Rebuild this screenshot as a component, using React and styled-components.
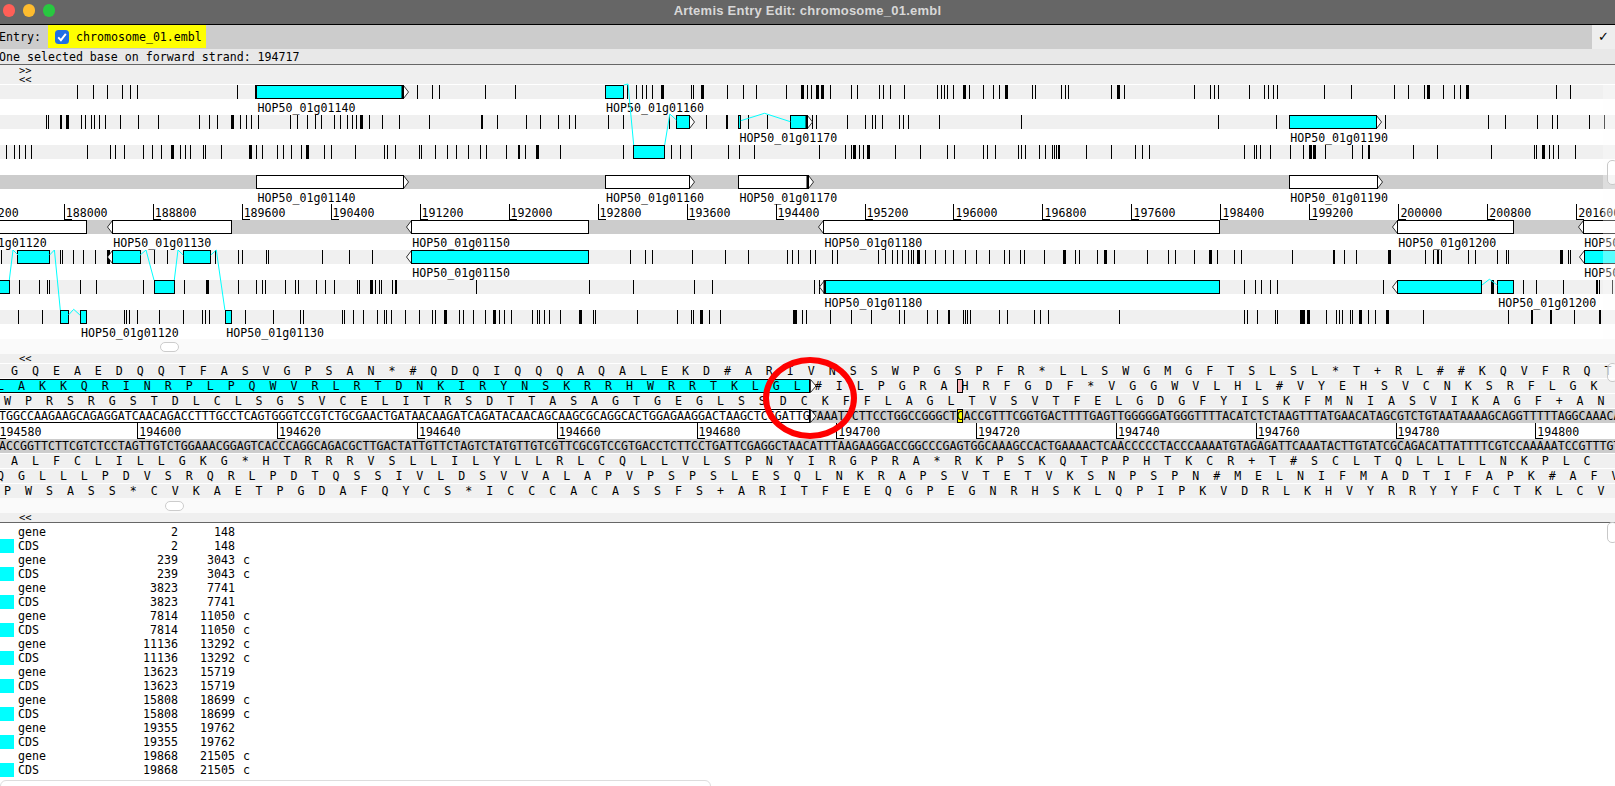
import React from "react";
import styled, { createGlobalStyle } from "styled-components";

const MONO = `"DejaVu Sans Mono", "Liberation Mono", monospace`;
const CYAN = "#00ffff";

const GlobalStyle = createGlobalStyle`
  html, body { margin: 0; padding: 0; background: #fff; overflow: hidden; }
  * { box-sizing: border-box; }
`;

const Page = styled.div`
  position: relative;
  width: 1615px;
  height: 786px;
  overflow: hidden;
  background: #fff;
  color: #000;
  font: 11.61px/14px ${MONO};
`;

/* ---- window chrome ---- */
const TitleBar = styled.header`
  display: grid;
  grid-template-columns: 1fr auto 1fr;
  align-items: center;
  height: 25px;
  padding-bottom: 3px;
  background: #666;
  border-bottom: 1px solid #000;
`;
const Lights = styled.div`
  display: flex;
  gap: 7.6px;
  padding-left: 3px;
`;
const Light = styled.span`
  width: 12.4px;
  height: 12.4px;
  border-radius: 50%;
  background: ${(p) => p.$color};
`;
const Title = styled.h1`
  margin: 0;
  font: bold 13px "Liberation Sans", Arial, sans-serif;
  letter-spacing: 0.24px;
  color: #d8d8d8;
`;
const EntryBar = styled.div`
  display: flex;
  align-items: stretch;
  height: 24px;
  background: #ccc;
`;
const EntryLabel = styled.span`
  line-height: 24px;
  margin-left: -1px;
  width: 49px;
`;
const EntryChip = styled.label`
  display: flex;
  align-items: center;
  gap: 7px;
  width: 158px;
  height: 23px;
  padding-left: 7px;
  background: #ffff00;
`;
const CheckBox = styled.span`
  display: block;
  width: 14px;
  height: 14px;
  border-radius: 3.5px;
  background: #1f6fe5;
`;
const ConfirmButton = styled.button`
  margin-left: auto;
  width: 23px;
  border: 0;
  padding: 0 0 2px;
  background: #eee;
  font: bold 13px "DejaVu Sans", sans-serif;
  color: #000;
`;
const StatusBar = styled.div`
  height: 16px;
  background: #e8e8e8;
  border-bottom: 1px solid #666;
  line-height: 17px;
  text-indent: -1px;
  white-space: pre;
`;

/* ---- feature panel ---- */
const Panel = styled.section`
  position: relative;
`;
const NavBar = styled.div`
  display: flex;
  flex-direction: column;
  height: ${(p) => p.$h}px;
  margin-bottom: ${(p) => p.$gap || 0}px;
  padding: ${(p) => p.$pad || 0}px 0 0 19px;
  background: #efefef;
  font-size: 10.4px;
  line-height: 9px;
  border-bottom: ${(p) => (p.$rule ? "1px solid #666" : "0")};
`;
const Strip = styled.div`
  height: 14px;
  background: ${(p) => (p.$gene ? "#ccc" : "#f0f0f0")};
`;
const StripArt = styled.svg`
  display: block;
  overflow: visible;
`;
const LabelRow = styled.div`
  position: relative;
  z-index: 1;
  height: ${(p) => p.$h || 16}px;
`;
const Label = styled.span.attrs((p) => ({ style: { left: p.$x } }))`
  position: absolute;
  top: 1px;
  line-height: 16px;
  white-space: pre;
`;
const Ruler = styled.div`
  position: relative;
  height: 16px;
  overflow: hidden;
`;
const RulerMark = styled.span.attrs((p) => ({ style: { left: p.$x } }))`
  position: absolute;
  top: 0;
  height: 16px;
  padding-left: 1px;
  border-left: 1px solid #000;
  line-height: 18px;
  &::after {
    content: "";
    position: absolute;
    left: 0;
    bottom: 0;
    width: 7px;
    border-bottom: 1px solid #000;
  }
`;
const Connectors = styled.svg`
  position: absolute;
  left: 0;
  top: 0;
  z-index: 2;
  pointer-events: none;
`;
const HScroll = styled.div`
  position: relative;
  height: 15px;
  background: #fafafa;
`;
const HThumb = styled.span.attrs((p) => ({ style: { left: p.$x } }))`
  position: absolute;
  top: 3px;
  width: 19px;
  height: 10px;
  background: #fff;
  border: 1px solid #ccc;
  border-radius: 5px;
`;

/* ---- sequence panel ---- */
const CodonRow = styled.div`
  position: relative;
  height: 14px;
  margin-top: 1px;
  overflow: hidden;
  background: #f0f0f0;
  white-space: pre;
`;
const DnaRow = styled(CodonRow)`
  margin-top: ${(p) => p.$top ?? 1}px;
  background: #ccc;
`;
const SeqText = styled.span.attrs((p) => ({ style: { left: p.$x } }))`
  position: absolute;
  top: 0;
  z-index: 2;
  line-height: 14px;
`;
const GeneFill = styled.i`
  position: absolute;
  left: -2px;
  top: 0;
  bottom: 0;
  width: 812px;
  z-index: 1;
  background: ${(p) => p.$fill};
  border: 1px solid #000;
`;
const GeneTip = styled.svg`
  position: absolute;
  left: 809.5px;
  top: 0;
  z-index: 3;
`;
const BaseMark = styled.i`
  position: absolute;
  left: 957px;
  top: 0;
  bottom: 0;
  width: 6px;
  z-index: 1;
  background: ${(p) => p.$fill};
  border: 1px solid #000;
`;
const Annotation = styled.div`
  position: absolute;
  left: 763px;
  top: 357px;
  width: 94px;
  height: 82px;
  z-index: 5;
  border: 6px solid #ff0000;
  border-radius: 50%;
`;

/* ---- feature list ---- */
const FeatureList = styled.ul`
  margin: 0;
  padding: 2px 0 0;
  list-style: none;
`;
const FeatureItem = styled.li`
  display: grid;
  grid-template-columns: 18px 60px 100px 57px 8px 10px;
  height: 14px;
  white-space: pre;
`;
const Swatch = styled.span`
  width: 14px;
  height: 14px;
  background: ${(p) => (p.$on ? CYAN : "transparent")};
`;
const Num = styled.span`
  text-align: right;
`;
const Strand = styled.span`
  grid-column: 6;
`;

/* ---- overlay scrollbars ---- */
const VTrack = styled.div.attrs((p) => ({ style: { top: p.$top, height: p.$h } }))`
  position: absolute;
  right: 0;
  width: 12px;
  z-index: 3;
  background: rgba(252, 252, 252, 0.35);
`;
const VThumb = styled.span.attrs((p) => ({ style: { top: p.$top, height: p.$h } }))`
  position: absolute;
  right: -3px;
  width: 11px;
  z-index: 4;
  border: 1px solid #c8c8c8;
  border-radius: 5px;
  background: rgba(255, 255, 255, 0.7);
`;
const BottomThumb = styled.div`
  position: absolute;
  left: 0;
  top: 780px;
  width: 711px;
  height: 12px;
  border: 1px solid #ddd;
  border-radius: 6px;
  background: #fff;
`;

/* ---- data: x positions measured from the three crops of the view ---- */
const MID = 540 / 1568;
const RIGHT = 535 / 1568;
const map3 = (l = [], m = [], r = []) => [
  ...l.map((x) => (x < 0 ? [-x * MID, 3] : [x * MID, 1])),
  ...m.map((x) => (x < 0 ? [540 - x * MID, 3] : [540 + x * MID, 1])),
  ...r.map((x) => (x < 0 ? [1080 - x * RIGHT, 3] : [1080 + x * RIGHT, 1])),
];
const L = (x) => x * MID;
const M = (x) => 540 + x * MID;
const R = (x) => 1080 + x * RIGHT;

const TOP_FRAMES = [
  {
    ticks: map3(
      [225, 271, 312, 354, 378, 399, 689, 740, 1212, 1255, 1276, 1409, 1494],
      [252, 280, 297, 307, 325, -350, 438, 445, -467, 544, 588, 628, 715, -758, 775, 788, -802, -817, 843, 904, 920, 985, 997, 1017, 1058, 1154, 1163, 1172, 1183, 1199, -1228, 1247, 1287, 1315, 1332, -1350, 1430, 1436, 1514, 1524, 1534],
      [92, -107, 130, 333, 382, 394, 405, 496, 540, 552, 565, 578, 716, 795, 921, 962, 1008, -1018, 1065, 1097, 1113, -1131, 1396, 1437]
    ),
    boxes: [
      { x: L(744), end: L(1172), dir: "r", fat: true },
      { x: M(190), end: M(243) },
    ],
  },
  {
    ticks: map3(
      [133, 140, 173, 178, -191, 236, 248, 265, 274, 288, 304, 349, 402, 460, 579, 606, 629, -671, 698, 714, 729, 748, 843, 862, 892, 915, 933, 970, 988, 1008, 1022, 1033, -1045, 1072, 1108, 1160, 1247, 1396, 1400, 1444, 1528],
      [0, 53, 85, 101, 198, 240, 376, 483, 539, 544, 605, 660, 790, 800, 890, 945, 964, 972, 992, 1041, 1053, 1070, 1160, 1396],
      [403, 575, 895, 1197, 1247, 1340, 1384, 1399, 1493, 1537]
    ),
    boxes: [
      { x: M(396), end: M(435), dir: "r" },
      { x: M(577), end: M(583) },
      { x: M(727), end: M(778), dir: "r", fat: true },
      { x: R(614), end: R(870), dir: "r" },
    ],
  },
  {
    ticks: map3(
      [16, 42, 56, 74, 89, 254, 318, 335, 361, 416, 442, 468, -496, 522, 536, 553, 589, 596, 643, -724, 744, 762, 805, 822, 844, 873, -888, 942, 962, 1030, 1116, 1123, 1148, 1216, 1222, 1264, 1299, 1323, 1360, 1394, 1412, 1468, 1503, 1507, 1525, -1556],
      [59, 242, 380, 407, 439, 547, 579, 622, 811, 885, 903, -909, 926, 937, -950, 1032, 1102, 1181, 1203, 1285, 1299, 1320, 1387, 1398, 1407, 1450, 1466, 1488, 1493, 1498, 1503, 1508],
      [19, 92, 162, 183, 201, 482, 511, 516, 528, 556, 616, 654, -670, -684, 717, 798, 826, 843, 848, 977, 1047, 1206, 1330, 1336, -1353, 1374, 1385, 1400, 1452]
    ),
    boxes: [{ x: M(272), end: M(362) }],
  },
];
const TOP_GENES = [
  { x: L(744), end: L(1172), dir: "r" },
  { x: M(190), end: M(435), dir: "r" },
  { x: M(576), end: M(780), dir: "r", fat: true },
  { x: R(613), end: R(872), dir: "r" },
];
const BOTTOM_GENES = [
  { x: -10, end: L(252) },
  { x: L(327), end: L(672), dir: "l" },
  { x: L(1195), end: M(141), dir: "l" },
  { x: M(824), end: R(409), dir: "l" },
  { x: R(931), end: R(1271), dir: "l" },
  { x: R(1476), end: 1640, dir: "l" },
];
const BOTTOM_FRAMES = [
  {
    ticks: map3(
      [4, 175, 181, 213, 240, 276, -311, 448, 484, 625, 692, 704, 773, 779, 936, 1014, 1081],
      [262, 306, 326, 442, 538, 605, 718, 731, 750, 785, 799, 849, 863, 982, 1003, 1022, 1036, 1052, 1070, 1077, 1084, -1096, 1119, 1148, 1177, 1200, 1235, 1267, 1305, 1348, 1363, 1395, 1405, 1464, -1518, 1554, 1565],
      [51, -70, 101, 197, 259, 279, 335, -379, 384, 402, 452, 473, 622, 741, 745, 775, 810, -903, 1010, 1034, 1045, 1050, 1058, 1136, 1159, 1223, 1248, 1253, -1407, 1429, 1435]
    ),
    boxes: [
      { x: L(52), end: L(144) },
      { x: L(328), end: L(407), dir: "l" },
      { x: L(532), end: L(612) },
      { x: L(1195), end: M(141), dir: "l" },
      { x: R(1478), end: 1640, dir: "l" },
    ],
  },
  {
    ticks: map3(
      [56, 112, 137, 143, 233, 280, 416, 535, -599, 692, 744, 762, 770, 829, 856, 866, 919, 943, 971, 1036, 1041, -1074, 1089, 1101, 1105, 1137, 1146, 1151, 1383],
      [143, 271, 448, 498, 797, 811],
      [482, 514, 531, 558, 578, 889, -1204, 1299, 1337, 1417, 1511, 1516, 1522, 1559]
    ),
    boxes: [
      { x: -10, end: L(27) },
      { x: L(448), end: L(507) },
      { x: M(826), end: R(409), dir: "l", fat: true },
      { x: R(931), end: R(1177), dir: "l" },
      { x: R(1223), end: R(1271) },
    ],
  },
  {
    ticks: map3(
      [53, 123, 361, 367, 376, 398, 463, 532, 586, 596, 607, 710, 794, 872, 881, 994, 1000, 1026, 1053, 1094, 1114, 1121, 1134, 1177, 1218, 1255, 1264, -1288, 1332, 1344, 1373, 1409, -1432, 1437, 1450, 1464, 1485, 1546, 1558, 1565],
      [12, 26, 59, -112, 153, 161, 283, 399, 439, 445, -464, 492, 524, -735, 742, 762, 773, 843, 904, 962, 1043, 1058, 1125, 1154, 1184, 1189, 1229, 1235, 1240, 1250, 1334, 1355, 1433, 1451, 1476],
      [115, 480, 488, 520, 571, 578, -646, -652, -666, 722, 749, 760, 769, 790, 796, -818, 845, 866, -897, 1006, 1255, 1321, 1326, 1377, 1381, 1449, 1520, 1525]
    ),
    boxes: [
      { x: L(175), end: L(199) },
      { x: L(233), end: L(252) },
      { x: L(654), end: L(673) },
    ],
  },
];

const EXON_LINKS = [
  [[623.7, 85], [628, 84], [633.7, 145]],
  [[664.7, 145], [669.8, 114], [676.4, 120]],
  [[740.8, 120.7], [764.5, 113.3], [790.4, 121.7]],
  [[9.3, 280], [13, 250], [18, 255]],
  [[49.6, 255], [54.4, 250], [60.3, 310]],
  [[68.5, 315], [73.7, 309.3], [79.9, 315]],
  [[140.2, 255], [146, 250], [154, 280]],
  [[174.3, 280], [178, 250], [183.2, 255]],
  [[210.8, 255], [216.3, 250], [224.9, 310]],
  [[1482, 285], [1489.4, 279.3], [1497.3, 285]],
];

const TOP_RULER = Array.from({ length: 19 }, (_, i) => ({
  x: -25.3 + 88.98 * i,
  text: String(187200 + 800 * i),
}));
const SEQ_RULER = Array.from({ length: 12 }, (_, i) => ({
  x: -2.5 + 139.8 * i,
  text: String(194580 + 20 * i),
}));

const DNA =
  "TGGCCAAGAAGCAGAGGATCAACAGACCTTTGCCTCAGTGGGTCCGTCTGCGAACTGATAACAAGATCAGATACAACAGCAAGCGCAGGCACTGGAGAAGGACTAAGCTCCGATTGTAAATTCTTCCTGGCCGGGCTCACCGTTTCGGTGACTTTTGAGTTGGGGGATGGGTTTTACATCTCTAAGTTTATGAACATAGCGTCTGTAATAAAAGCAGGTTTTTAGGCAAACA";
const COMPLEMENT = { A: "T", T: "A", G: "C", C: "G" };
const DNA_REV = DNA.replace(/[ATGC]/g, (b) => COMPLEMENT[b]);
const spaced = (s) => s.split("").join("  ");

const CODONS = {
  f1: spaced("GQEAEDQQTFASVGPSAN*#QDQIQQQAQALEKD#ARIVNSSWPGSPFR*LLSWGMGFTSLSL*T+RL##KQVFRQT"),
  f2a: spaced("LAKKQRINRPLPQWVRLRTDNKIRYNSKRRHWRRTKLGL#ILPGRAHRFGDF*VGGWVLHL#VYEHSVCNKSRFLGK"),
  f3: spaced("WPRSRGSTDLCLSGSVCELITRSDTTASAGTGEGLSSDCKFFLAGLTVSVTFELGDGFYISKFMNIASVIKAGF+AN"),
  r1: spaced("ALFCLILLGKG*HTRRRVSLLILYLLRLCQLLVLSPNYIRGPRA*RKPSKQTPPHTKCR+T#SCLTQLLLLNKPLC"),
  r2: spaced("QGLLLPDVSRQRLPDTQSSIVLDSVVALAPVPSPSLESQLNKRAPSVTETVKSNPSPN#MELNIFMADTIFAPK#AFV"),
  r3: spaced("PWSASS*CVKAETPGDAFQYCS*ICCCACASSFS+ARITFEEQGPEGNRHSKLQPIPKVDRLKHVYRRYYFCTKLCV"),
};

const FEATURES = [
  ["2", "148", ""],
  ["239", "3043", "c"],
  ["3823", "7741", ""],
  ["7814", "11050", "c"],
  ["11136", "13292", "c"],
  ["13623", "15719", ""],
  ["15808", "18699", "c"],
  ["19355", "19762", ""],
  ["19868", "21505", "c"],
];

/* ---- small drawing pieces ---- */
const snap = (v) => Math.floor(v) + 0.5;

function FeatureBox({ box, fill }) {
  const x = snap(box.x);
  const end = snap(box.end);
  const { dir, fat } = box;
  const tip =
    dir === "r"
      ? `${end},0.5 ${end + 5},7 ${end},13.5`
      : dir === "l"
      ? `${x},0.5 ${x - 5},7 ${x},13.5`
      : null;
  return (
    <g>
      {tip && <polygon points={tip} fill="#fff" stroke="#000" strokeWidth="0.8" />}
      <rect x={x} y="0.5" width={end - x} height="13" fill={fill} stroke="#000" strokeWidth="1" />
      {fat && <rect x={dir === "r" ? end - 2 : x - 1} y="0" width="2.5" height="14" fill="#000" />}
    </g>
  );
}

function Track({ gene, ticks = [], boxes = [] }) {
  return (
    <Strip $gene={gene}>
      <StripArt width="1615" height="14">
        {ticks.map(([x, w], i) => (
          <rect key={i} x={Math.round(x)} y="0" width={w} height="14" fill="#000" />
        ))}
        {boxes.map((b, i) => (
          <FeatureBox key={i} box={b} fill={gene ? "#fff" : CYAN} />
        ))}
      </StripArt>
    </Strip>
  );
}

function Labels({ items = [], h }) {
  return (
    <LabelRow $h={h}>
      {items.map(([x, name]) => (
        <Label key={name + x} $x={x}>
          {name}
        </Label>
      ))}
    </LabelRow>
  );
}

function Scale({ marks }) {
  return (
    <Ruler>
      {marks.map((m) => (
        <RulerMark key={m.text} $x={m.x}>
          {m.text}
        </RulerMark>
      ))}
    </Ruler>
  );
}

const Tip = () => (
  <GeneTip width="8" height="14">
    <polygon points="0.5,0.5 6,7 0.5,13.5" fill="#fff" stroke="#000" strokeWidth="0.8" />
  </GeneTip>
);

export default function App() {
  return (
    <Page>
      <GlobalStyle />
      <TitleBar>
        <Lights>
          <Light $color="#ff5f57" />
          <Light $color="#febc2e" />
          <Light $color="#28c840" />
        </Lights>
        <Title>Artemis Entry Edit: chromosome_01.embl</Title>
        <span />
      </TitleBar>

      <EntryBar>
        <EntryLabel>Entry:</EntryLabel>
        <EntryChip>
          <CheckBox>
            <svg width="14" height="14" viewBox="0 0 14 14">
              <path d="M3.2 7.4 L5.9 10.2 L10.8 3.9" fill="none" stroke="#fff" strokeWidth="1.9" />
            </svg>
          </CheckBox>
          chromosome_01.embl
        </EntryChip>
        <ConfirmButton>✓</ConfirmButton>
      </EntryBar>
      <StatusBar>One selected base on forward strand: 194717</StatusBar>

      <Panel>
        <NavBar $h={19} $gap={1} $pad={1}>
          <span>&gt;&gt;</span>
          <span>&lt;&lt;</span>
        </NavBar>
        <Track {...TOP_FRAMES[0]} />
        <Labels
          items={[
            [L(748), "HOP50_01g01140"],
            [M(192), "HOP50_01g01160"],
          ]}
        />
        <Track {...TOP_FRAMES[1]} />
        <Labels
          items={[
            [M(579), "HOP50_01g01170"],
            [R(616), "HOP50_01g01190"],
          ]}
        />
        <Track {...TOP_FRAMES[2]} />
        <Labels />
        <Track gene boxes={TOP_GENES} />
        <Labels
          h={15}
          items={[
            [L(748), "HOP50_01g01140"],
            [M(192), "HOP50_01g01160"],
            [M(579), "HOP50_01g01170"],
            [R(616), "HOP50_01g01190"],
          ]}
        />
        <Scale marks={TOP_RULER} />
        <Track gene boxes={BOTTOM_GENES} />
        <Labels
          items={[
            [L(136) - 98, "HOP50_01g01120"],
            [L(329), "HOP50_01g01130"],
            [L(1197), "HOP50_01g01150"],
            [M(826), "HOP50_01g01180"],
            [R(933), "HOP50_01g01200"],
            [R(1478), "HOP50_01g01210"],
          ]}
        />
        <Track {...BOTTOM_FRAMES[0]} />
        <Labels
          items={[
            [L(1197), "HOP50_01g01150"],
            [R(1478), "HOP50_01g01210"],
          ]}
        />
        <Track {...BOTTOM_FRAMES[1]} />
        <Labels
          items={[
            [M(826), "HOP50_01g01180"],
            [R(1226), "HOP50_01g01200"],
          ]}
        />
        <Track {...BOTTOM_FRAMES[2]} />
        <Labels
          h={15}
          items={[
            [L(235), "HOP50_01g01120"],
            [L(657), "HOP50_01g01130"],
          ]}
        />
        <HScroll>
          <HThumb $x={159.5} />
        </HScroll>
        <Connectors width="1615" height="290" viewBox="0 65 1615 290">
          {EXON_LINKS.map((pts, i) => (
            <polyline key={i} points={pts.join(" ")} fill="none" stroke={CYAN} strokeWidth="1" />
          ))}
        </Connectors>
      </Panel>

      <NavBar $h={9}>
        <span>&lt;&lt;</span>
      </NavBar>

      <CodonRow>
        <SeqText $x={11}>{CODONS.f1}</SeqText>
      </CodonRow>
      <CodonRow>
        <GeneFill $fill={CYAN} />
        <Tip />
        <BaseMark $fill="#ffb6bb" />
        <SeqText $x={-3}>{CODONS.f2a}</SeqText>
      </CodonRow>
      <CodonRow>
        <SeqText $x={4}>{CODONS.f3}</SeqText>
      </CodonRow>
      <DnaRow>
        <GeneFill $fill="#fff" />
        <Tip />
        <BaseMark $fill="#ffff00" />
        <SeqText $x={-1}>{DNA}</SeqText>
      </DnaRow>
      <Scale marks={SEQ_RULER} />
      <DnaRow $top={0}>
        <SeqText $x={-1}>{DNA_REV}</SeqText>
      </DnaRow>
      <CodonRow>
        <SeqText $x={11}>{CODONS.r1}</SeqText>
      </CodonRow>
      <CodonRow>
        <SeqText $x={-3}>{CODONS.r2}</SeqText>
      </CodonRow>
      <CodonRow>
        <SeqText $x={4}>{CODONS.r3}</SeqText>
      </CodonRow>
      <HScroll>
        <HThumb $x={165.3} />
      </HScroll>
      <NavBar $h={10} $rule>
        <span>&lt;&lt;</span>
      </NavBar>

      <FeatureList>
        {FEATURES.flatMap(([start, end, strand]) =>
          ["gene", "CDS"].map((type) => (
            <FeatureItem key={type + start}>
              <Swatch $on={type === "CDS"} />
              <span>{type}</span>
              <Num>{start}</Num>
              <Num>{end}</Num>
              <Strand>{strand}</Strand>
            </FeatureItem>
          ))
        )}
      </FeatureList>

      <Annotation />
      <VTrack $top={85} $h={254} />
      <VThumb $top={160} $h={25} />
      <VThumb $top={363} $h={19} />
      <VThumb $top={522} $h={21} />
      <BottomThumb />
    </Page>
  );
}
